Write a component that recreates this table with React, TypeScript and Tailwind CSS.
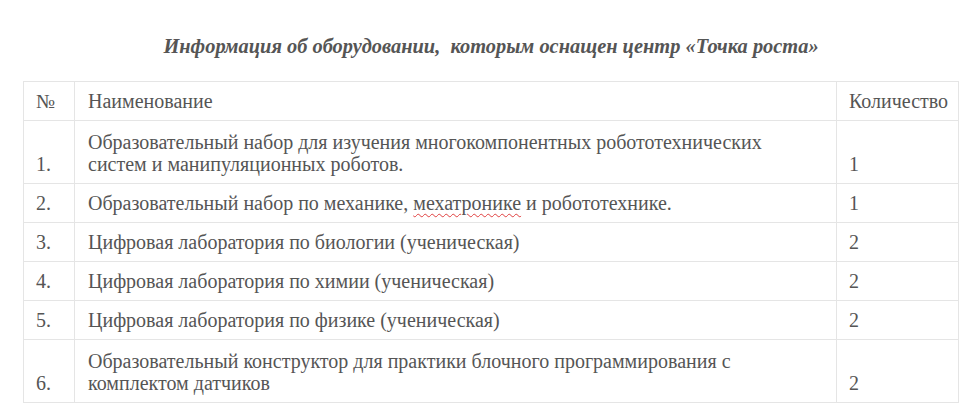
import React from "react";

const rows: { n: string; name: React.ReactNode; qty: string; tall?: boolean }[] = [
  {
    n: "1.",
    name: "Образовательный набор для изучения многокомпонентных робототехнических систем и манипуляционных роботов.",
    qty: "1",
    tall: true,
  },
  {
    n: "2.",
    name: (
      <>
        Образовательный набор по механике,{" "}
        <span className="underline decoration-wavy decoration-[#e04040] decoration-1 underline-offset-[3px]">
          мехатронике
        </span>{" "}
        и робототехнике.
      </>
    ),
    qty: "1",
  },
  { n: "3.", name: "Цифровая лаборатория по биологии (ученическая)", qty: "2" },
  { n: "4.", name: "Цифровая лаборатория по химии (ученическая)", qty: "2" },
  { n: "5.", name: "Цифровая лаборатория по физике (ученическая)", qty: "2" },
  {
    n: "6.",
    name: "Образовательный конструктор для практики блочного программирования с комплектом датчиков",
    qty: "2",
    tall: true,
  },
];

export default function App() {
  return (
    <div className="min-h-[420px] bg-white [font-family:Liberation_Serif,Times_New_Roman,serif] text-[#555]">
      <div className="ml-[23px] w-[936px] pt-[32px]">
        <h1 className="mb-[20px] text-center text-[20.4px] font-bold italic leading-[29px] whitespace-pre">
          {"Информация об оборудовании,  которым оснащен центр «Точка роста»"}
        </h1>
        <table className="w-full border-collapse text-[20px] leading-[22px]">
          <thead>
            <tr>
              <td className="w-[51px] border border-[#e5e5e5] px-3 py-2 align-bottom">№</td>
              <td className="border border-[#e5e5e5] pl-[13px] pr-3 py-2 align-bottom">Наименование</td>
              <td className="w-[122px] border border-[#e5e5e5] pl-3 pr-1 py-2 align-bottom whitespace-nowrap">
                Количество
              </td>
            </tr>
          </thead>
          <tbody>
            {rows.map((r) => {
              const pad = r.tall ? "pt-[10px] pb-2" : "py-2";
              return (
                <tr key={r.n}>
                  <td className={`border border-[#e5e5e5] px-3 align-bottom ${pad}`}>{r.n}</td>
                  <td className={`border border-[#e5e5e5] pl-[13px] pr-[46px] align-bottom ${pad}`}>{r.name}</td>
                  <td className={`border border-[#e5e5e5] pl-3 pr-1 align-bottom ${pad}`}>{r.qty}</td>
                </tr>
              );
            })}
          </tbody>
        </table>
      </div>
    </div>
  );
}
